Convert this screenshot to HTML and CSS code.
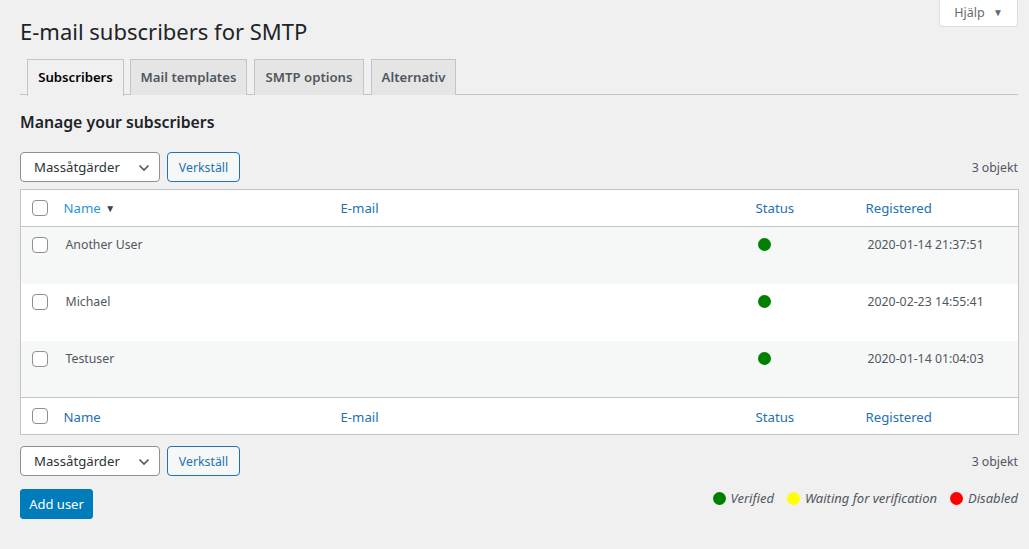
FILE: index.html
```html
<!DOCTYPE html>
<html lang="sv">
<head>
<meta charset="utf-8">
<title>E-mail subscribers for SMTP</title>
<link rel="stylesheet" href="styles.css">
</head>
<body>
<div class="help-wrap">
  <button class="help-btn">Hjälp <span class="help-arrow">▼</span></button>
</div>
<div class="wrap">
  <h1 class="page-title">E-mail subscribers for SMTP</h1>
  <nav class="nav-tabs">
    <a class="nav-tab active">Subscribers</a>
    <a class="nav-tab">Mail templates</a>
    <a class="nav-tab">SMTP options</a>
    <a class="nav-tab">Alternativ</a>
  </nav>
  <h2 class="section-title">Manage your subscribers</h2>

  <div class="tablenav top">
    <div class="bulk">
      <div class="select">Massåtgärder
        <svg class="chev" width="12" height="8" viewBox="0 0 12 8"><path d="M1.5 1.5 L6 6 L10.5 1.5" fill="none" stroke="#50575e" stroke-width="1.6"/></svg>
      </div>
      <button class="btn-secondary">Verkställ</button>
    </div>
    <span class="count">3 objekt</span>
  </div>

  <table class="list">
    <colgroup>
      <col class="c-cb"><col class="c-name"><col class="c-email"><col class="c-status"><col class="c-reg">
    </colgroup>
    <thead>
      <tr>
        <th class="cb"><span class="box"></span></th>
        <th><a class="sorted">Name</a> <span class="sort-ind">▼</span></th>
        <th><a>E-mail</a></th>
        <th><a>Status</a></th>
        <th><a>Registered</a></th>
      </tr>
    </thead>
    <tbody>
      <tr class="alt">
        <td class="cb"><span class="box"></span></td>
        <td>Another User</td><td></td>
        <td><span class="dot green"></span></td>
        <td>2020-01-14 21:37:51</td>
      </tr>
      <tr>
        <td class="cb"><span class="box"></span></td>
        <td>Michael</td><td></td>
        <td><span class="dot green"></span></td>
        <td>2020-02-23 14:55:41</td>
      </tr>
      <tr class="alt">
        <td class="cb"><span class="box"></span></td>
        <td>Testuser</td><td></td>
        <td><span class="dot green"></span></td>
        <td>2020-01-14 01:04:03</td>
      </tr>
    </tbody>
    <tfoot>
      <tr>
        <th class="cb"><span class="box"></span></th>
        <th><a>Name</a></th>
        <th><a>E-mail</a></th>
        <th><a>Status</a></th>
        <th><a>Registered</a></th>
      </tr>
    </tfoot>
  </table>

  <div class="tablenav bottom">
    <div class="bulk">
      <div class="select">Massåtgärder
        <svg class="chev" width="12" height="8" viewBox="0 0 12 8"><path d="M1.5 1.5 L6 6 L10.5 1.5" fill="none" stroke="#50575e" stroke-width="1.6"/></svg>
      </div>
      <button class="btn-secondary">Verkställ</button>
    </div>
    <span class="count">3 objekt</span>
  </div>

  <div class="footer-row">
    <button class="btn-primary">Add user</button>
    <div class="legend">
      <span class="dot green"></span><em>Verified</em>
      <span class="dot yellow"></span><em>Waiting for verification</em>
      <span class="dot red"></span><em>Disabled</em>
    </div>
  </div>
</div>
</body>
</html>
```
FILE: styles.css
```css
* { box-sizing: border-box; }
html, body { margin: 0; padding: 0; }
body {
  background: #f0f0f1;
  font-family: "Noto Sans", "Open Sans", sans-serif;
  font-size: 12.3px;
  color: #3c434a;
  width: 1029px;
  height: 549px;
  overflow: hidden;
  position: relative;
}
.help-wrap {
  position: absolute;
  top: 0;
  right: 11px;
}
.help-btn {
  width: 79px;
  height: 27px;
  background: #fff;
  border: 1px solid #dcdcde;
  border-top: none;
  border-radius: 0 0 4px 4px;
  font-family: inherit;
  font-size: 12.5px;
  color: #646970;
  padding: 0 0 2px 0;
}
.help-arrow { font-size: 10px; margin-left: 5px; color: #646970; vertical-align: 1px; }

.wrap { padding: 0 11px 0 20px; }
.page-title {
  margin: 0;
  padding: 17px 0 0;
  height: 59px;
  font-size: 22px;
  font-weight: 400;
  line-height: 29px;
  color: #1d2327;
}
.nav-tabs {
  display: flex;
  gap: 7px;
  padding-left: 7px;
  border-bottom: 1px solid #c3c4c7;
  height: 36px;
}
.nav-tab {
  display: block;
  height: 36px;
  padding: 0;
  text-align: center;
  white-space: nowrap;
  background: #e5e5e5;
  border: 1px solid #c3c4c7;
  border-bottom: none;
  font-size: 13.2px;
  font-weight: 600;
  line-height: 35px;
  color: #50575e;
}
.nav-tab:nth-child(2) { width: 117px; }
.nav-tab:nth-child(3) { width: 110px; }
.nav-tab:nth-child(4) { width: 85px; }
.nav-tab.active {
  width: 97px;
  margin-right: -1px;
  background: #f0f0f1;
  color: #000;
  height: 37px;
  margin-bottom: -1px;
}
.section-title {
  margin: 0;
  height: 57px;
  padding-top: 16px;
  font-size: 15.8px;
  font-weight: 600;
  line-height: 22px;
  color: #1d2327;
}
.tablenav {
  display: flex;
  justify-content: space-between;
  align-items: center;
  height: 30px;
}
.tablenav.top { margin-bottom: 7px; }
.tablenav.bottom { margin-top: 11px; }
.bulk { display: flex; gap: 7px; }
.select {
  width: 140px;
  height: 30px;
  border: 1px solid #8c8f94;
  border-radius: 4px;
  background: #fff;
  font-size: 13.2px;
  line-height: 28px;
  padding-left: 13px;
  color: #2c3338;
  position: relative;
}
.chev { position: absolute; right: 9px; top: 11px; }
.btn-secondary {
  height: 30px;
  width: 73px;
  border: 1px solid #2271b1;
  border-radius: 4px;
  background: #f6f7f7;
  color: #2271b1;
  font-family: inherit;
  font-size: 12.3px;
  padding: 0;
}
.count { color: #50575e; font-size: 12.3px; }

.list {
  width: 998px;
  border-collapse: collapse;
  table-layout: fixed;
  background: #fff;
  border: 1px solid #c3c4c7;
}
.c-cb { width: 35px; }
.c-name { width: 277px; }
.c-email { width: 415px; }
.c-status { width: 110px; }
.c-reg { width: 161px; }
.list th {
  text-align: left;
  font-weight: 400;
  font-size: 13.2px;
  height: 37px;
  padding: 0 8px;
  vertical-align: middle;
}
.list thead tr { border-bottom: 1px solid #c3c4c7; }
.list tfoot tr { border-top: 1px solid #c3c4c7; }
.list tfoot th { height: 37px; padding-top: 1px; }
.list th a { color: #2271b1; }
.list th a.sorted { color: #2a96d3; }
.sort-ind { font-size: 10px; color: #3c434a; margin-left: 1px; vertical-align: 1px; }
.list td {
  height: 57px;
  vertical-align: top;
  padding: 8px 10px 0;
  font-size: 12.3px;
  line-height: 19px;
  color: #50575e;
}
.list tr.alt td { background: #f6f7f7; }
.list .cb { padding: 0 0 0 11px; }
.list td.cb { padding-top: 10px; }
.box {
  display: block;
  width: 16px;
  height: 16px;
  border: 1px solid #8c8f94;
  border-radius: 4px;
  background: #fff;
}
.dot {
  display: inline-block;
  width: 13px;
  height: 13px;
  border-radius: 50%;
  vertical-align: middle;
}
.list td .dot { margin-left: 0; margin-top: 3px; vertical-align: top; }
.green { background: #008000; }
.yellow { background: #ffff00; }
.red { background: #ff0000; }

.footer-row {
  display: flex;
  justify-content: space-between;
  align-items: center;
  margin-top: 13px;
}
.btn-primary {
  height: 30px;
  width: 73px;
  background: #007cba;
  color: #fff;
  border: 1px solid #007cba;
  border-radius: 3px;
  font-family: inherit;
  font-size: 13px;
  padding: 0;
}
.legend {
  display: flex;
  align-items: center;
  font-size: 13px;
  color: #50575e;
  margin-top: -12px;
}
.legend em { margin-left: 5px; margin-right: 13px; }
.legend em:last-child { margin-right: 0; }
```
